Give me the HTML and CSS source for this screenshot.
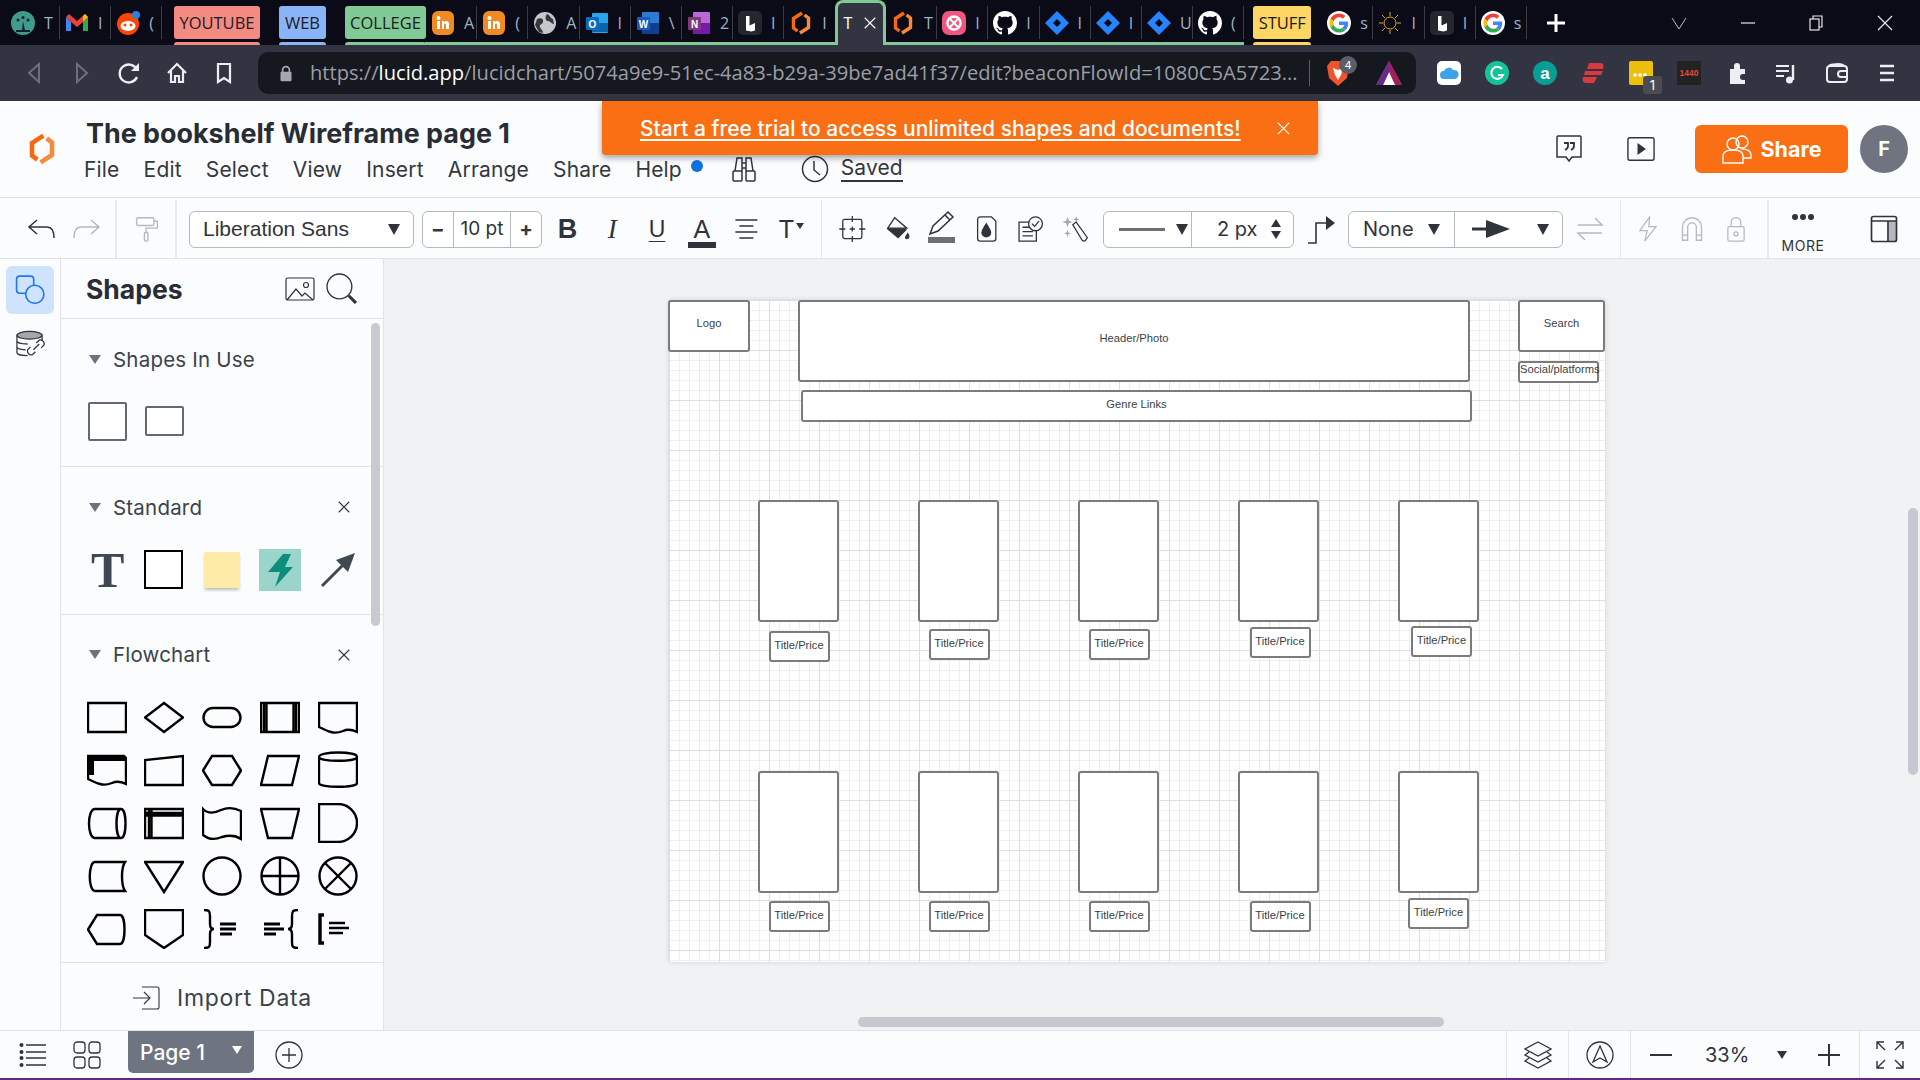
FILE: index.html
```html
<!DOCTYPE html>
<html lang="en">

<head>
  <meta charset="UTF-8">
  <title>The bookshelf Wireframe page 1 - Lucidchart</title>
  <link rel="stylesheet" href="styles.css">
</head>

<body>
  <!-- favicons and logos used more than once -->
  <svg class="defs" width="0" height="0">
    <symbol id="lucid" viewBox="0 0 24 24">
      <path d="M13 2 4.500 7.500V17l4 3" fill="none" stroke="#f56a10" stroke-width="3.400" />
      <path d="M11 22l8.500-5.500V7l-4-3" fill="none" stroke="#f88a3a" stroke-width="3.400" />
    </symbol>
    <symbol id="lucidspark" viewBox="0 0 24 24">
      <rect width="24" height="24" rx="5" fill="#24272e" />
      <path d="M8 5h3.500v9.500L17 12v7.500l-3.500 1-5.500-1z" fill="#fff" />
    </symbol>
    <symbol id="moodle" viewBox="0 0 24 24">
      <rect x="1" width="22" height="24" rx="6" fill="#f08a24" />
      <rect x="6" y="10" width="3" height="8" fill="#fff" />
      <path d="M11 18v-8h2v1c2-2 5-1 5 2v5h-3v-4c0-2-2-2-2 0v4z" fill="#fff" />
      <circle cx="7.500" cy="7" r="2" fill="#fff" />
    </symbol>
    <symbol id="github" viewBox="0 0 16 16">
      <path fill="#fff" d="M8 0C3.580 0 0 3.580 0 8c0 3.540 2.290 6.530 5.470 7.590.400.070.550-.170.550-.380 0-.190-.010-.820-.010-1.490-2.010.370-2.530-.490-2.690-.940-.090-.230-.480-.940-.820-1.130-.280-.150-.680-.520-.010-.530.630-.010 1.080.580 1.230.820.720 1.210 1.870.870 2.330.660.070-.520.280-.870.510-1.070-1.780-.200-3.640-.890-3.640-3.950 0-.870.310-1.590.820-2.150-.080-.200-.360-1.020.080-2.120 0 0 .670-.210 2.200.820.640-.180 1.320-.270 2-.270.680 0 1.360.090 2 .270 1.530-1.040 2.200-.820 2.200-.820.440 1.100.160 1.920.080 2.120.510.560.820 1.270.820 2.150 0 3.070-1.870 3.750-3.650 3.950.290.250.540.730.540 1.480 0 1.070-.010 1.930-.010 2.200 0 .210.150.460.550.380A8.013 8.013 0 0016 8c0-4.420-3.580-8-8-8z" />
    </symbol>
    <symbol id="jira" viewBox="0 0 24 24">
      <path d="M12 0l12 12-12 12L0 12z" fill="#2684ff" />
      <path d="M12 8l4 4-4 4-4-4z" fill="#0a0b16" />
    </symbol>
    <symbol id="google" viewBox="-6 -6 60 60">
      <circle cx="24" cy="24" r="30" fill="#fff" />
      <path fill="#EA4335" d="M24 9.500c3.540 0 6.710 1.220 9.210 3.600l6.850-6.850C35.900 2.380 30.470 0 24 0 14.620 0 6.510 5.380 2.560 13.220l7.980 6.190C12.430 13.720 17.740 9.500 24 9.500z" />
      <path fill="#4285F4" d="M46.980 24.550c0-1.570-.150-3.090-.380-4.550H24v9.020h12.940c-.580 2.960-2.260 5.480-4.780 7.180l7.730 6c4.510-4.180 7.090-10.360 7.090-17.650z" />
      <path fill="#FBBC05" d="M10.530 28.590c-.480-1.450-.760-2.990-.760-4.590s.270-3.140.760-4.590l-7.980-6.190C.920 16.460 0 20.120 0 24c0 3.880.920 7.540 2.560 10.780l7.970-6.190z" />
      <path fill="#34A853" d="M24 48c6.480 0 11.930-2.130 15.890-5.810l-7.730-6c-2.150 1.450-4.920 2.300-8.160 2.300-6.260 0-11.570-4.220-13.470-9.910l-7.980 6.190C6.510 42.620 14.620 48 24 48z" />
    </symbol>
    <symbol id="x-mark" viewBox="0 0 16 16">
      <path d="M2 2l12 12M14 2 2 14" fill="none" stroke="currentColor" stroke-width="1.300" />
    </symbol>
  </svg>

  <!-- browser tabs -->
  <div class="tabbar">
    <div class="tab tab-first"><svg viewBox="0 0 24 24"><circle cx="12" cy="12" r="12" fill="#3f9c8c" /><circle cx="7" cy="9" r="1.500" fill="#123" /><circle cx="12" cy="6.500" r="1.500" fill="#123" /><circle cx="17" cy="9" r="1.500" fill="#123" /><path d="M11 19l1-9 2 9z" fill="#123" /><rect x="5" y="19" width="14" height="2" fill="#123" /></svg><span>T</span></div>
    <div class="tab"><svg viewBox="0 0 24 24"><path d="M1 6v14h5V11z" fill="#4285f4" /><path d="M23 6v14h-5V11z" fill="#34a853" /><path d="M1 6l5 5 6 5 6-5 5-5-3-3-8 7-8-7z" fill="#ea4335" /><path d="M18 11l5-5-3-3-2 2z" fill="#fbbc04" /></svg><span>I</span></div>
    <div class="tab"><svg viewBox="0 0 24 24"><circle cx="12" cy="13" r="11" fill="#ff4500" /><ellipse cx="12" cy="15" rx="7.500" ry="5" fill="#fff" /><circle cx="9" cy="14" r="1.500" fill="#ff4500" /><circle cx="15" cy="14" r="1.500" fill="#ff4500" /><circle cx="20" cy="4" r="4" fill="#2f7ed8" /></svg><span>(</span></div>
    <div class="group group-red">YOUTUBE</div>
    <div class="group group-blue">WEB</div>
    <div class="group group-green">COLLEGE</div>
    <div class="tab tab-line"><svg><use href="#moodle" /></svg><span>A</span></div>
    <div class="tab tab-line"><svg><use href="#moodle" /></svg><span>(</span></div>
    <div class="tab tab-line"><svg viewBox="0 0 24 24"><circle cx="12" cy="12" r="11" fill="#c4c7cc" /><path d="M4 8c4-2 7 0 6 3s-4 2-3 5 3 3 3 6l-4-1-4-7zM14 3c3 1 3 4 6 5l1 5c-3 0-3-3-6-3s-3-5-1-7z" fill="#34373d" /></svg><span>A</span></div>
    <div class="tab tab-line"><svg viewBox="0 0 24 24"><rect x="7" y="2" width="16" height="20" rx="1" fill="#28a8ea" /><path d="M7 12h16v9H7z" fill="#0a64ad" /><rect x="1" y="6" width="13" height="13" rx="1" fill="#0f6cbd" /><text x="7.500" y="16.500" class="svg-letter">O</text></svg><span>I</span></div>
    <div class="tab tab-line"><svg viewBox="0 0 24 24"><rect x="6" y="1" width="17" height="22" rx="1" fill="#2b7cd3" /><rect x="6" y="12" width="17" height="11" fill="#103f91" /><rect x="1" y="6" width="13" height="13" rx="1" fill="#185abd" /><text x="7.500" y="16.500" class="svg-letter">W</text></svg><span>\</span></div>
    <div class="tab tab-line"><svg viewBox="0 0 24 24"><rect x="6" y="1" width="17" height="22" rx="1" fill="#ba68d8" /><rect x="6" y="12" width="17" height="11" fill="#7719aa" /><rect x="1" y="6" width="13" height="13" rx="1" fill="#80397b" /><text x="7.500" y="16.500" class="svg-letter">N</text></svg><span>2</span></div>
    <div class="tab tab-line"><svg><use href="#lucidspark" /></svg><span>I</span></div>
    <div class="tab tab-line tab-before-active"><svg><use href="#lucid" /></svg><span>I</span></div>
    <div class="tab-active"><span>T</span><svg class="tab-close"><use href="#x-mark" /></svg></div>
    <div class="tab tab-line"><svg><use href="#lucid" /></svg><span>T</span></div>
    <div class="tab tab-line"><svg viewBox="0 0 24 24"><rect width="24" height="24" rx="7" fill="#f2557f" /><circle cx="12" cy="12" r="6.500" fill="none" stroke="#fff" stroke-width="2.500" /><path d="M7 7l10 10M17 7 7 17" stroke="#fff" stroke-width="2" /></svg><span>I</span></div>
    <div class="tab tab-line"><svg><use href="#github" /></svg><span>I</span></div>
    <div class="tab tab-line"><svg><use href="#jira" /></svg><span>I</span></div>
    <div class="tab tab-line"><svg><use href="#jira" /></svg><span>I</span></div>
    <div class="tab tab-line"><svg><use href="#jira" /></svg><span>U</span></div>
    <div class="tab tab-line"><svg><use href="#github" /></svg><span>(</span></div>
    <div class="group group-yellow">STUFF</div>
    <div class="tab"><svg><use href="#google" /></svg><span>s</span></div>
    <div class="tab"><svg viewBox="0 0 24 24" fill="none" stroke="#e2a32b" stroke-width="1"><circle cx="12" cy="12" r="6" /><path d="M12 1v4M12 19v4M1 12h4M19 12h4M4 4l3 3M17 17l3 3M20 4l-3 3M7 17l-3 3" /></svg><span>I</span></div>
    <div class="tab"><svg><use href="#lucidspark" /></svg><span>I</span></div>
    <div class="tab"><svg><use href="#google" /></svg><span>s</span></div>
    <svg class="new-tab" viewBox="0 0 20 20"><path d="M10 1v18M1 10h18" stroke="#fff" stroke-width="3" /></svg>
    <div class="win-controls">
      <svg viewBox="0 0 16 16"><path d="M1 3l7 11 7-11" fill="none" stroke="#b9bcc4" stroke-width="1" /></svg>
      <svg viewBox="0 0 16 16"><path d="M1 8h14" stroke="#e8e8e8" stroke-width="1.200" /></svg>
      <svg viewBox="0 0 16 16" fill="none" stroke="#e8e8e8" stroke-width="1.200"><rect x="2" y="4" width="9" height="11" /><path d="M5 4V1h9v11h-3" /></svg>
      <svg viewBox="0 0 16 16"><path d="M1 1l14 14M15 1 1 15" stroke="#e8e8e8" stroke-width="1.200" /></svg>
    </div>
  </div>

  <!-- address bar -->
  <div class="addrbar">
    <div class="nav-icons">
      <svg viewBox="0 0 24 24"><path d="M17 3 7 12l10 9z" fill="none" stroke="#6c707b" stroke-width="2" /></svg>
      <svg viewBox="0 0 24 24"><path d="M7 3l10 9-10 9z" fill="none" stroke="#6c707b" stroke-width="2" /></svg>
      <svg viewBox="0 0 24 24"><path d="M20 9a9 9 0 1 0 0 7" fill="none" stroke="#eceef2" stroke-width="2.400" /><path d="M14 10h8V2z" fill="#eceef2" /></svg>
      <svg viewBox="0 0 24 24"><path d="M3 12 12 3l9 9M6 10v11h4v-6h4v6h4V10" fill="none" stroke="#eceef2" stroke-width="2.200" /></svg>
      <svg viewBox="0 0 24 24"><path d="M6 3h12v18l-6-4-6 4z" fill="none" stroke="#eceef2" stroke-width="2.200" /></svg>
    </div>
    <div class="urlbox">
      <svg class="lock" viewBox="0 0 16 20"><path d="M4 9V6a4 4 0 0 1 8 0v3" fill="none" stroke="#a4a7af" stroke-width="2" /><rect x="1.500" y="8" width="13" height="11" rx="1.500" fill="#a4a7af" /></svg>
      <div class="url">https://<b>lucid.app</b>/lucidchart/5074a9e9-51ec-4a83-b29a-39be7ad41f37/edit?beaconFlowId=1080C5A5723...</div>
      <div class="url-sep"></div>
      <div class="brave">
        <svg viewBox="0 0 24 28"><path d="M5 2h14l4 5-2 12-9 8-9-8L1 7z" fill="#f0542a" /><path d="M7 9l5 2 5-2-2 7-3 5-3-5z" fill="#fff" /></svg>
        <span class="brave-count">4</span>
      </div>
      <svg class="bat" viewBox="0 0 26 24"><path d="M13 0l13 24H0z" fill="#ff4724" /><path d="M13 0l13 24H19L13 11z" fill="#9e1f63" /><path d="M13 11l6 13H7z" fill="#fff" /><path d="M13 0v11L7 24H0z" fill="#662d91" /></svg>
    </div>
    <div class="ext-icons">
      <svg viewBox="0 0 24 24"><rect width="24" height="24" rx="5" fill="#fff" /><path d="M7 18a4 4 0 0 1 0-8 5 5 0 0 1 9-1 4.500 4.500 0 0 1 2 9z" fill="#3da2e8" /></svg>
      <svg viewBox="0 0 24 24"><circle cx="12" cy="12" r="12" fill="#15c39a" /><path d="M17 8a6 6 0 1 0 1 6h-5" fill="none" stroke="#fff" stroke-width="2" /></svg>
      <svg viewBox="0 0 24 24"><circle cx="12" cy="12" r="12" fill="#0a9d95" /><text x="12" y="18" class="svg-a">a</text></svg>
      <svg viewBox="0 0 24 24"><path d="M8 2h11c3 0 4 2 3 6H6zM4 10h18l-2 4H3zM2 16h14l-3 6H5c-3 0-4-3-3-6z" fill="#da3940" /></svg>
      <div class="ext-pill">
        <svg viewBox="0 0 24 24"><rect width="24" height="24" rx="2" fill="#edc00f" /><circle cx="6" cy="14" r="1.800" fill="#fff" /><circle cx="11" cy="14" r="1.800" fill="#fff" /><circle cx="16" cy="14" r="1.800" fill="#fff" /></svg>
        <span class="ext-count">1</span>
      </div>
      <svg viewBox="0 0 24 24"><rect width="24" height="24" fill="#222" /><text x="12" y="15" class="svg-1440">1440</text></svg>
      <svg viewBox="0 0 24 24"><path d="M5 8h4V5a3 3 0 0 1 6 0v3h5v5h-2a3 3 0 0 0 0 6h2v4H5z" fill="#eceef2" /></svg>
      <svg class="ext-music" viewBox="0 0 24 24"><path d="M2 5h13M2 10h13M2 15h8" stroke="#eceef2" stroke-width="2" /><path d="M19 4v15" stroke="#eceef2" stroke-width="2.400" /><circle cx="15.500" cy="19" r="3.500" fill="#eceef2" /></svg>
      <svg class="ext-wallet" viewBox="0 0 24 24" fill="none" stroke="#eceef2" stroke-width="2"><rect x="2" y="5" width="20" height="16" rx="3" /><path d="M4 5c0-2 14-3 15 0M22 10h-6a3 3 0 0 0 0 6h6" /></svg>
      <svg class="ext-menu" viewBox="0 0 24 24"><path d="M5 5h14M5 12h14M5 19h14" stroke="#eceef2" stroke-width="2.400" /></svg>
    </div>
  </div>

  <!-- document header -->
  <header class="appbar">
    <svg class="app-logo"><use href="#lucid" /></svg>
    <div class="doc-info">
      <div class="doc-title">The bookshelf Wireframe page 1</div>
      <nav class="menu">
        <span>File</span>
        <span>Edit</span>
        <span>Select</span>
        <span>View</span>
        <span>Insert</span>
        <span>Arrange</span>
        <span>Share</span>
        <span class="menu-help">Help</span>
        <i class="help-dot"></i>
        <svg class="binoculars" viewBox="0 0 26 28" fill="none" stroke="#2f343c" stroke-width="1.500"><path d="M4 16 6 3h5v13M22 16 20 3h-5v13M11 8h4M11 13h4" /><rect x="2" y="16" width="9" height="10" rx="1" /><rect x="15" y="16" width="9" height="10" rx="1" /></svg>
        <svg class="clock" viewBox="0 0 28 28" fill="none" stroke="#2f343c" stroke-width="1.500"><circle cx="14" cy="14" r="12.500" /><path d="M13 6v9l6 5" /></svg>
        <span class="saved">Saved</span>
      </nav>
    </div>
    <div class="app-actions">
      <svg class="act-icon" viewBox="0 0 28 28" fill="none" stroke="#2f343c" stroke-width="1.500"><path d="M3 1h22a1 1 0 0 1 1 1v20H17l-3 4-3-4H2V2a1 1 0 0 1 1-1z" /><path d="M9 8h4v3c0 2-1 3-3 4M15 8h4v3c0 2-1 3-3 4" stroke-width="1.800" /></svg>
      <svg class="act-icon" viewBox="0 0 30 26" fill="none" stroke="#2f343c" stroke-width="1.500"><rect x="1" y="1" width="28" height="24" rx="2" /><path d="M12 8l7 5-7 5z" fill="#2f343c" /></svg>
      <button class="share-btn">
        <svg viewBox="0 0 30 32" fill="none" stroke="#fff" stroke-width="1.400"><circle cx="20" cy="9" r="6" /><circle cx="11" cy="11" r="6" /><path d="M1 30V23c0-4 4-6 10-6s10 2 10 6v7zM19 16c6 0 10 2 10 6v3h-8" /></svg>
        Share
      </button>
      <div class="avatar">F</div>
    </div>
    <div class="trial-banner">
      <a>Start a free trial to access unlimited shapes and documents!</a>
      <svg class="banner-close"><use href="#x-mark" /></svg>
    </div>
  </header>

  <!-- formatting toolbar -->
  <div class="toolbar">
    <div class="tool-set tool-history">
      <svg class="tool" viewBox="0 0 30 26" fill="none" stroke="#2f343c" stroke-width="1.500"><path d="M10 4 2 11l8 7M2 11h18c5 0 7 4 7 11" /></svg>
      <svg class="tool faded" viewBox="0 0 30 26" fill="none" stroke="#b5b8be" stroke-width="1.500"><path d="M20 4l8 7-8 7M28 11H10c-5 0-7 4-7 11" /></svg>
    </div>
    <div class="tool-set tool-paint">
      <svg class="tool" viewBox="0 0 30 30" fill="none" stroke="#b5b8be" stroke-width="1.600"><rect x="3" y="2" width="20" height="9" rx="2" /><path d="M23 6h4v8H14v5" /><rect x="12" y="19" width="4" height="10" rx="1.500" /></svg>
    </div>
    <div class="select select-font">Liberation Sans<i class="caret"></i></div>
    <div class="stepper">
      <span class="step-btn">&minus;</span>
      <span class="step-val">10 pt</span>
      <span class="step-btn">+</span>
    </div>
    <div class="tool-set tool-text">
      <span class="tool glyph glyph-b">B</span>
      <span class="tool glyph glyph-i">I</span>
      <span class="tool glyph glyph-u">U</span>
      <span class="tool glyph glyph-a">A</span>
      <svg class="tool" viewBox="0 0 26 26" stroke="#2f343c" stroke-width="1.700"><path d="M2 4h22M6 10h14M2 16h22M6 22h14" /></svg>
      <span class="tool glyph glyph-t">T<i class="caret caret-small"></i></span>
    </div>
    <div class="tool-set tool-style">
      <svg class="tool" viewBox="0 0 30 30" fill="none" stroke="#2f343c" stroke-width="1.500"><rect x="4" y="4" width="22" height="22" rx="2" /><path d="M15 0v7M15 23v7M0 15h7M23 15h7M12 15h6M15 12v6" /></svg>
      <svg class="tool" viewBox="0 0 30 30"><path d="M12 2l14 14-10 10L3 15z" fill="#2f343c" /><path d="M12 2 4 14h22z" fill="#fbfcfe" stroke="#2f343c" stroke-width="1.500" /><path d="M27 19c2 3 3 5 1 7s-5 0-4-2z" fill="#2f343c" /></svg>
      <div class="pen-tool">
        <svg viewBox="0 0 30 26" fill="none" stroke="#2f343c" stroke-width="1.500"><path d="M4 24l3-8L22 2l5 5-15 14zM19 5l5 5" /></svg>
        <i></i>
      </div>
      <svg class="tool" viewBox="0 0 24 30" fill="none" stroke="#2f343c" stroke-width="1.500"><path d="M5 1h13l5 5v20a3 3 0 0 1-3 3H5a3 3 0 0 1-3-3V4a3 3 0 0 1 3-3z" /><path d="M12 9c3 5 5 7 5 10a5 5 0 0 1-10 0c0-3 2-5 5-10z" fill="#2f343c" /></svg>
      <svg class="tool" viewBox="0 0 30 30" fill="none" stroke="#2f343c" stroke-width="1.500"><path d="M16 7H2v22h20V16M6 13h8M6 18h12M6 23h12" /><circle cx="21" cy="9" r="8" fill="#fbfcfe" /><path d="M17 9l3 3 5-6" /></svg>
      <svg class="tool" viewBox="0 0 30 30"><path d="M6 1l1.500 4.500L12 7l-4.500 1.500L6 13 4.500 8.500 0 7l4.500-1.500zM16 0l1 3 3 1-3 1-1 3-1-3-3-1 3-1zM6 16l1 3 3 1-3 1-1 3-1-3-3-1 3-1z" fill="#a4a7ae" /><path d="M12 10l4-3 13 18-3 4c-2 0-3-1-3-1z" fill="none" stroke="#2f343c" stroke-width="1.400" /></svg>
    </div>
    <div class="select select-line">
      <div class="sel-part sel-dash"><i class="line-sample"></i><i class="caret"></i></div>
      <div class="sel-part sel-px">2 px<span class="spin"><i></i><i></i></span></div>
    </div>
    <svg class="tool tool-elbow" viewBox="0 0 30 30" fill="none" stroke="#2f343c" stroke-width="1.600"><path d="M2 29h8V9h12" /><path d="M20 2l9 7-9 7z" fill="#2f343c" stroke="none" /></svg>
    <div class="select select-ends">
      <div class="sel-part sel-none">None<i class="caret"></i></div>
      <div class="sel-part sel-arrow">
        <svg viewBox="0 0 38 18"><path d="M0 9h24" stroke="#2f343c" stroke-width="3" /><path d="M14 0l24 9-24 9z" fill="#2f343c" /></svg>
        <i class="caret"></i>
      </div>
    </div>
    <svg class="tool tool-swap" viewBox="0 0 30 26" fill="none" stroke="#b5b8be" stroke-width="1.500"><path d="M3 9h24l-7-7M27 17H3l7 7" /></svg>
    <div class="tool-set tool-shape">
      <svg class="tool" viewBox="0 0 26 32" fill="none" stroke="#b5b8be" stroke-width="1.500"><path d="M15 1 3 18h9L9 31l14-18h-9z" /></svg>
      <svg class="tool" viewBox="0 0 26 30" fill="none" stroke="#b5b8be" stroke-width="1.500"><path d="M2 28V13a11 11 0 0 1 22 0v15h-6V13a5 5 0 0 0-10 0v15zM2 22h6M18 22h6" /></svg>
      <svg class="tool" viewBox="0 0 24 32" fill="none" stroke="#b5b8be" stroke-width="1.500"><path d="M6 13V8a6 6 0 0 1 12 0v5" /><rect x="2" y="13" width="20" height="18" rx="2" /><circle cx="12" cy="22" r="2.500" /></svg>
    </div>
    <div class="more"><span class="more-dots"><i></i><i></i><i></i></span><span class="more-label">MORE</span></div>
    <svg class="tool tool-panel" viewBox="0 0 28 28" fill="none" stroke="#2f343c" stroke-width="1.700"><path d="M19 6h7v20h-7z" fill="#b5b8be" stroke="none" /><rect x="1.500" y="1.500" width="25" height="25" rx="2" /><path d="M2 6h24M18 6v20" /></svg>
  </div>

  <div class="main">
    <aside class="rail">
      <div class="rail-btn rail-active">
        <svg viewBox="0 0 28 28" fill="none" stroke="#1f78ea" stroke-width="1.500"><rect x="1" y="1" width="16" height="16" rx="3" /><circle cx="18" cy="18" r="8.500" fill="#cfe3fd" /></svg>
      </div>
      <div class="rail-btn">
        <svg viewBox="0 0 32 30" fill="none" stroke="#2f343c" stroke-width="1.300"><path d="M2 6v18c0 2 6 3 11 3M28 6v6M2 12c0 2 6 3 11 3M2 18c0 2 6 3 9 3" /><ellipse cx="15" cy="6" rx="13" ry="4" fill="#a4a7ae" /><path d="M22 14l3-3a4 4 0 0 1 5 5l-3 3M21 23l-3 3a4 4 0 0 1-5-5l3-3M19 21l6-6" /></svg>
      </div>
    </aside>

    <aside class="panel">
      <div class="panel-head">
        <h2>Shapes</h2>
        <svg class="head-img" viewBox="0 0 30 24" fill="none" stroke="#2f343c" stroke-width="1.200"><rect x="1" y="1" width="28" height="22" rx="1.500" /><circle cx="21" cy="8" r="2.500" /><path d="M2 23l9-11 6 7 3-3 8 7" /></svg>
        <svg class="head-search" viewBox="0 0 30 30" fill="none" stroke="#2f343c" stroke-width="1.300"><circle cx="13" cy="13" r="12" /><path d="M22 22l7 7" stroke-width="3" /></svg>
      </div>

      <section class="sec sec-use">
        <div class="sec-title"><i class="tri"></i>Shapes In Use</div>
        <div class="sec-row">
          <i class="use-square"></i>
          <i class="use-rect"></i>
        </div>
      </section>

      <section class="sec sec-std">
        <div class="sec-title"><i class="tri"></i>Standard<svg class="sec-x"><use href="#x-mark" /></svg></div>
        <div class="sec-row sec-row-std">
          <span class="std-t">T</span>
          <i class="std-square"></i>
          <i class="std-sticky"></i>
          <span class="std-bolt"><svg viewBox="0 0 42 42"><path d="M24 5h8l-6 13h8L16 38l5-15H9z" fill="#0b8f7c" /></svg></span>
          <svg class="std-arrow" viewBox="0 0 36 36"><path d="M2 34 26 10" stroke="#3f4853" stroke-width="3" /><path d="M35 1 28 20 16 8z" fill="#3f4853" /></svg>
        </div>
      </section>

      <section class="sec sec-flow">
        <div class="sec-title"><i class="tri"></i>Flowchart<svg class="sec-x"><use href="#x-mark" /></svg></div>
        <div class="flow-grid">
          <svg viewBox="0 0 40 40"><path d="M1 6h38v29H1z" /></svg>
          <svg viewBox="0 0 40 40"><path d="M20 6l19 14.500L20 35 1 20.500z" /></svg>
          <svg viewBox="0 0 40 40"><rect x="1.500" y="11" width="37" height="19" rx="9.500" /></svg>
          <svg viewBox="0 0 40 40"><path d="M1 6h38v29H1zM4 6v29M6.500 6v29M33.500 6v29M36 6v29" /></svg>
          <svg viewBox="0 0 40 40"><path d="M1 6h38v29c-6-3-10-3-14-1-5 2-9 2-12 1-4-1-8-3-12-5z" /></svg>

          <svg viewBox="0 0 40 40"><path d="M1 6h36l2 2v26c-6-3-10-3-14-1-5 2-9 2-12 1-4-1-8-3-12-5z" /><path d="M2 7h36v4H7v14H2z" class="fill" /></svg>
          <svg viewBox="0 0 40 40"><path d="M1 35V10l38-4v29z" /></svg>
          <svg viewBox="0 0 40 40"><path d="M10 6h20l9 14.500L30 35H10L1 20.500z" /></svg>
          <svg viewBox="0 0 40 40"><path d="M8 6h31l-7 29H1z" /></svg>
          <svg viewBox="0 0 40 40"><path d="M1 7c0-6 38-6 38 0v26c0 5-38 5-38 0zM1 7c0 5 38 5 38 0" /></svg>

          <svg viewBox="0 0 40 40"><path d="M8 6h26c6 0 6 29 0 29H8C0 35 0 6 8 6zM34 6c-6 0-6 29 0 29" /></svg>
          <svg viewBox="0 0 40 40"><path d="M1 6h38v29H1zM1 10h38M1 12.500h38M5 6v29M7.500 6v29" /></svg>
          <svg viewBox="0 0 40 40"><path d="M1 6c5 5 12 4 18 1 7-3 14-2 20 1v28c-6-4-12-4-19-2-7 3-14 2-19-2z" /></svg>
          <svg viewBox="0 0 40 40"><path d="M1 6h38l-7 29H8z" /></svg>
          <svg viewBox="0 0 40 40"><path d="M1 1h19a19 19 0 0 1 0 38H1z" /></svg>

          <svg viewBox="0 0 40 40"><path d="M8 6h30c-4 6-4 23 0 29H8C1 35 1 6 8 6z" /></svg>
          <svg viewBox="0 0 40 40"><path d="M1 6h38L20 36z" /></svg>
          <svg viewBox="0 0 40 40"><circle cx="20" cy="20" r="18.500" /></svg>
          <svg viewBox="0 0 40 40"><circle cx="20" cy="20" r="18.500" /><path d="M20 1v38M1 20h38" /></svg>
          <svg viewBox="0 0 40 40"><circle cx="20" cy="20" r="18.500" /><path d="M7 7l26 26M33 7 7 33" /></svg>

          <svg viewBox="0 0 40 40"><path d="M10 6h23c6 0 6 29 0 29H10L1 20.500z" /></svg>
          <svg viewBox="0 0 40 40"><path d="M1 1h38v25L20 39 1 26z" /></svg>
          <svg viewBox="0 0 40 40"><path d="M2 1c5 0 6 1 6 6v8c0 3 1 5 4 5-3 0-4 2-4 5v8c0 5-1 6-6 6" /><path class="bars" d="M18 15h16M18 20h16M18 25h12" /></svg>
          <svg viewBox="0 0 40 40"><path d="M38 1c-5 0-6 1-6 6v8c0 3-1 5-4 5 3 0 4 2 4 5v8c0 5 1 6 6 6" /><path class="bars" d="M4 15h16M4 20h20M4 25h12" /></svg>
          <svg viewBox="0 0 40 40"><path class="bracket" d="M6 6H2v28h4" /><path d="M11 14h16M11 19h20M11 24h14" /></svg>
        </div>
      </section>

      <div class="import">
        <svg viewBox="0 0 28 24" fill="none" stroke="#2f343c" stroke-width="1.100"><path d="M1 12h17M12 6l6 6-6 6M10 1h15a2 2 0 0 1 2 2v18a2 2 0 0 1-2 2H10" /></svg>
        Import Data
      </div>
    </aside>

    <div class="canvas">
      <div class="page">
        <div class="shape s-logo">Logo</div>
        <div class="shape s-header">Header/Photo</div>
        <div class="shape s-search">Search</div>
        <div class="shape s-social">Social/platforms</div>
        <div class="shape s-genre">Genre Links</div>

        <div class="shape card c1 r1"></div>
        <div class="shape card c2 r1"></div>
        <div class="shape card c3 r1"></div>
        <div class="shape card c4 r1"></div>
        <div class="shape card c5 r1"></div>
        <div class="shape label l1">Title/Price</div>
        <div class="shape label l2">Title/Price</div>
        <div class="shape label l3">Title/Price</div>
        <div class="shape label l4">Title/Price</div>
        <div class="shape label l5">Title/Price</div>

        <div class="shape card c1 r2"></div>
        <div class="shape card c2 r2"></div>
        <div class="shape card c3 r2"></div>
        <div class="shape card c4 r2"></div>
        <div class="shape card c5 r2"></div>
        <div class="shape label l6">Title/Price</div>
        <div class="shape label l7">Title/Price</div>
        <div class="shape label l8">Title/Price</div>
        <div class="shape label l9">Title/Price</div>
        <div class="shape label l10">Title/Price</div>
      </div>
      <div class="scroll-x"></div>
      <div class="scroll-y"></div>
    </div>
  </div>

  <!-- page tabs and zoom -->
  <footer class="bottombar">
    <svg class="foot-icon foot-list" viewBox="0 0 28 26" fill="none" stroke="#2f343c" stroke-width="1.300"><path d="M7 3h20M7 10h20M7 16h20M7 23h20" /><g fill="#2f343c" stroke="none"><circle cx="2.500" cy="3" r="2" /><circle cx="2.500" cy="10" r="2" /><circle cx="2.500" cy="16" r="2" /><circle cx="2.500" cy="23" r="2" /></g></svg>
    <svg class="foot-icon foot-grid" viewBox="0 0 28 28" fill="none" stroke="#2f343c" stroke-width="1.300"><rect x="1" y="1" width="11" height="11" rx="3" /><rect x="16" y="1" width="11" height="11" rx="3" /><rect x="1" y="16" width="11" height="11" rx="3" /><rect x="16" y="16" width="11" height="11" rx="3" /></svg>
    <div class="page-tab">Page 1<i class="caret caret-white"></i></div>
    <svg class="foot-icon foot-add" viewBox="0 0 28 28" fill="none" stroke="#2f343c" stroke-width="1.300"><circle cx="14" cy="14" r="13" /><path d="M14 7v14M7 14h14" /></svg>
    <div class="foot-right">
      <div class="foot-cell foot-layers"><svg viewBox="0 0 28 28" fill="none" stroke="#2f343c" stroke-width="1.300"><path d="M14 1l13 7-13 7L1 8z" /><path d="M5 11l-4 3 13 7 13-7-4-3M5 17l-4 3 13 7 13-7-4-3" /></svg></div>
      <div class="foot-cell foot-nav"><svg viewBox="0 0 28 28" fill="none" stroke="#2f343c" stroke-width="1.300"><circle cx="14" cy="14" r="13" /><path d="M14 5l7 16-7-4-7 4z" /></svg></div>
      <div class="foot-zoom">
        <svg viewBox="0 0 22 4"><path d="M0 2h22" stroke="#2f343c" stroke-width="2" /></svg>
        <span class="zoom-val">33%</span>
        <i class="caret"></i>
        <svg viewBox="0 0 22 22"><path d="M0 11h22M11 0v22" stroke="#2f343c" stroke-width="2" /></svg>
      </div>
      <div class="foot-cell foot-full"><svg viewBox="0 0 28 28" fill="none" stroke="#2f343c" stroke-width="1.400"><path d="M1 8V1h7M1 1l8 8M27 8V1h-7M27 1l-8 8M1 20v7h7M1 27l8-8M27 20v7h-7M27 27l-8-8" /></svg></div>
    </div>
  </footer>
  <div class="purple-line"></div>
</body>

</html>
```

FILE: styles.css
```css
* {
  margin: 0;
  padding: 0;
  box-sizing: border-box;
}

html,
body {
  width: 1920px;
  height: 1080px;
  overflow: hidden;
}

body {
  display: flex;
  flex-direction: column;
  background-color: #fbfcfe;
  color: #2f343c;
  font-family: Inter, "Noto Sans", sans-serif;
}

i {
  display: block;
  font-style: normal;
}

svg {
  display: block;
  flex: none;
}

.defs {
  position: absolute;
}

/* browser tabs */
.tabbar {
  display: flex;
  height: 45px;
  flex: none;
  background-color: #0a0b16;
  font-family: "Open Sans", sans-serif;
  position: relative;
}

.tab {
  display: flex;
  align-items: center;
  width: 51.2px;
  height: 33px;
  margin-top: 6px;
  padding-left: 5px;
  border-right: 1px solid #3a3c46;
  color: #9db4c6;
  font-size: 16px;
}

.tab-first {
  width: 60px;
  padding-left: 11px;
}

.tab svg {
  width: 24px;
  height: 24px;
}

.tab span {
  margin-left: 9px;
  width: 12px;
}

.tab-before-active {
  border-right: none;
}

.group {
  display: flex;
  align-items: center;
  justify-content: center;
  height: 33px;
  margin-top: 6px;
  border-radius: 3px;
  color: #1c1c20;
  font-size: 16.5px;
  position: relative;
}

.group::after {
  content: "";
  position: absolute;
  left: 0;
  right: 0;
  top: 36px;
  height: 3px;
  border-radius: 3px 3px 0 0;
  background-color: inherit;
}

.group-red {
  width: 86px;
  margin-left: 11.6px;
  background-color: #f38b83;
}

.group-blue {
  width: 47px;
  margin-left: 19px;
  background-color: #8ab4f8;
}

.group-green {
  width: 81px;
  margin-left: 19px;
  background-color: #81c995;
}

.group-yellow {
  width: 58px;
  margin-left: 9px;
  margin-right: 11px;
  background-color: #fdd663;
}

.tab-active {
  display: flex;
  align-items: center;
  width: 50.5px;
  height: 45px;
  padding: 0 0 2px 5px;
  border: 3px solid #81c995;
  border-bottom: none;
  border-radius: 8px 8px 0 0;
  background-color: #323541;
  color: #fff;
  font-size: 16px;
  position: relative;
}

.tab-close {
  width: 14px;
  height: 14px;
  margin-left: 11px;
  color: #fff;
}

.tab-line {
  position: relative;
}

.tab-line::before {
  content: "";
  position: absolute;
  left: -1px;
  right: -1px;
  top: 36px;
  height: 3px;
  background-color: #81c995;
}

.new-tab {
  width: 20px;
  height: 20px;
  margin: 13px 0 0 19px;
}

.win-controls {
  position: absolute;
  right: 0;
  top: 0;
  width: 249px;
  height: 45px;
  display: flex;
  align-items: center;
  gap: 52.7px;
}

.win-controls svg {
  width: 16px;
  height: 16px;
}

/* address bar */
.addrbar {
  display: flex;
  align-items: center;
  height: 56px;
  flex: none;
  background-color: #323541;
}

.nav-icons {
  display: flex;
  width: 258px;
  padding-left: 22px;
  gap: 23.5px;
}

.nav-icons svg {
  width: 24px;
  height: 24px;
}

.urlbox {
  display: flex;
  align-items: center;
  width: 1158px;
  height: 42px;
  border-radius: 10px;
  background-color: #16181f;
  padding-left: 21px;
}

.lock {
  width: 14px;
  height: 17px;
}

.url {
  width: 988px;
  margin: 0 0 2px 17px;
  color: #9b9ea6;
  font-family: "Open Sans", sans-serif;
  font-size: 20.12px;
  white-space: nowrap;
  overflow: hidden;
}

.url b {
  color: #fff;
  font-weight: 400;
}

.url-sep {
  width: 1px;
  height: 26px;
  margin-left: 11px;
  background-color: #5a5d66;
}

.brave {
  position: relative;
  margin-left: 16px;
}

.brave svg {
  width: 24px;
  height: 28px;
}

.brave-count {
  position: absolute;
  left: 13px;
  top: -3px;
  width: 18px;
  height: 18px;
  border-radius: 50%;
  background-color: #5b5e68;
  color: #fff;
  font-size: 11px;
  line-height: 18px;
  text-align: center;
}

.bat {
  width: 26px;
  height: 24px;
  margin-left: 26px;
}

.ext-icons {
  display: flex;
  align-items: center;
  gap: 24px;
  margin-left: 21px;
}

.ext-icons svg {
  width: 24px;
  height: 24px;
}

.ext-music {
  margin-left: 1px;
}

.ext-wallet {
  margin-left: 3px;
}

.ext-menu {
  margin-left: 2px;
}

.ext-pill {
  position: relative;
}

.ext-count {
  position: absolute;
  left: 14px;
  top: 15px;
  width: 19px;
  height: 18px;
  border-radius: 3px;
  background-color: #4a4c52;
  color: #fff;
  font-size: 13px;
  line-height: 18px;
  text-align: center;
}

.svg-letter {
  fill: #fff;
  font: 700 10px "Liberation Sans", sans-serif;
  text-anchor: middle;
}

.svg-a {
  fill: #fff;
  font: 700 17px "Liberation Sans", sans-serif;
  text-anchor: middle;
}

.svg-1440 {
  fill: #e0483f;
  font: 700 8.5px "Liberation Sans", sans-serif;
  text-anchor: middle;
}

/* document header */
.appbar {
  display: flex;
  align-items: flex-start;
  height: 97px;
  flex: none;
  position: relative;
  background-color: #fbfcfe;
  border-bottom: 1px solid #e2e3e6;
}

.app-logo {
  width: 32px;
  height: 32px;
  margin: 32px 0 0 26px;
}

.doc-info {
  margin: 15px 0 0 28px;
}

.doc-title {
  font-size: 26.9px;
  font-weight: 700;
  line-height: 34px;
  color: #282c35;
  white-space: nowrap;
}

.menu {
  display: flex;
  align-items: center;
  gap: 24.2px;
  height: 36px;
  margin: 1px 0 0 -2px;
  font-size: 21px;
  letter-spacing: 0.15px;
  color: #33383f;
}

.menu-help {
  position: relative;
}

.help-dot {
  width: 12px;
  height: 12px;
  border-radius: 50%;
  margin: -6px 0 0 -15px;
  background-color: #1071e5;
}

.binoculars {
  width: 26px;
  height: 28px;
  margin-left: 4px;
}

.clock {
  width: 28px;
  height: 28px;
  margin-left: 20px;
}

.saved {
  margin-left: -13px;
  border-bottom: 2px solid #2f343c;
  line-height: 24px;
}

.app-actions {
  display: flex;
  align-items: center;
  margin: 24px 12px 0 auto;
}

.act-icon {
  width: 28px;
  height: 28px;
  margin-right: 44px;
}

.share-btn {
  display: flex;
  align-items: center;
  justify-content: center;
  gap: 9px;
  width: 153px;
  height: 48px;
  margin: 0 12px 0 -4px;
  border: none;
  border-radius: 6px;
  background-color: #fa6e14;
  color: #fff;
  font-family: Inter, sans-serif;
  font-size: 21.5px;
  font-weight: 700;
}

.share-btn svg {
  width: 30px;
  height: 32px;
}

.avatar {
  width: 48px;
  height: 48px;
  border-radius: 50%;
  background-color: #6f7480;
  color: #fff;
  font-size: 20px;
  font-weight: 700;
  line-height: 48px;
  text-align: center;
}

.trial-banner {
  position: absolute;
  left: 602px;
  top: 0;
  width: 716px;
  height: 54px;
  display: flex;
  align-items: center;
  padding-left: 38px;
  background-color: #fa6e14;
  border-radius: 0 0 4px 4px;
  box-shadow: 0 3px 6px rgba(0, 0, 0, 0.35);
  color: #fff;
  font-size: 21px;
  font-weight: 500;
}

.trial-banner a {
  text-decoration: underline;
  text-underline-offset: 3px;
  white-space: nowrap;
}

.banner-close {
  width: 15px;
  height: 15px;
  margin-left: 35px;
  color: #fff;
}

/* formatting toolbar */
.toolbar {
  display: flex;
  align-items: center;
  height: 61px;
  flex: none;
  padding-top: 2px;
  background-color: #fbfcfe;
  border-bottom: 1px solid #e2e3e6;
}

.tool {
  width: 44px;
  height: 26px;
  flex: none;
}

.tool-set {
  display: flex;
  align-items: center;
  height: 100%;
}

.tool-history {
  width: 117px;
  padding-left: 20px;
  border-right: 2px solid #e8e9ec;
}

.tool-paint {
  width: 60px;
  border-right: 2px solid #e8e9ec;
  padding-left: 8px;
}

.select {
  display: flex;
  align-items: center;
  height: 37px;
  border: 1px solid #b5b8be;
  border-radius: 6px;
  background-color: #fff;
  font-size: 20px;
}

.select-font {
  width: 225px;
  margin-left: 12px;
  padding: 0 13px;
  justify-content: space-between;
  font-family: "Liberation Sans", sans-serif;
  font-size: 21px;
}

.caret {
  width: 0;
  height: 0;
  border-left: 6px solid transparent;
  border-right: 6px solid transparent;
  border-top: 11px solid #2f343c;
}

.caret-small {
  border-left-width: 4px;
  border-right-width: 4px;
  border-top-width: 6px;
  margin: 0 0 6px 2px;
}

.caret-white {
  border-top-color: #fff;
  border-left-width: 5.5px;
  border-right-width: 5.5px;
  border-top-width: 8px;
  margin-bottom: 5px;
}

.stepper {
  display: flex;
  align-items: center;
  width: 120px;
  height: 37px;
  margin-left: 8px;
  border: 1px solid #b5b8be;
  border-radius: 6px;
  background-color: #fff;
}

.step-btn {
  width: 30px;
  text-align: center;
  font-size: 20px;
  font-weight: 700;
  color: #33383f;
}

.step-val {
  width: 59px;
  height: 100%;
  border-left: 1px solid #b5b8be;
  border-right: 1px solid #b5b8be;
  text-align: center;
  font-size: 19px;
  line-height: 33px;
  white-space: nowrap;
}

.glyph {
  display: flex;
  align-items: center;
  justify-content: center;
  height: 34px;
  font-family: "Liberation Sans", sans-serif;
  font-size: 27px;
  color: #2f343c;
  position: relative;
}

.glyph-b {
  font-weight: 700;
}

.glyph-i {
  font-family: "Liberation Serif", serif;
  font-style: italic;
  font-weight: 400;
}

.glyph-u {
  font-size: 23px;
  text-decoration: underline;
  text-underline-offset: 4px;
  text-decoration-thickness: 1px;
}

.glyph-a {
  font-size: 25px;
}

.glyph-a::after {
  content: "";
  position: absolute;
  left: 9px;
  right: 8px;
  bottom: -2px;
  height: 6px;
  background-color: #2f343c;
}

.glyph-t {
  font-size: 25px;
}

.tool-text {
  width: 277px;
  margin-left: 3px;
  border-right: 1px solid #e8e9ec;
}

.tool-text .tool {
  width: 44.8px;
}

.tool-style {
  width: 273px;
  margin-left: 8px;
}

.tool-style .tool {
  width: 44.6px;
}

.pen-tool {
  width: 44.6px;
  height: 38px;
  display: flex;
  flex-direction: column;
  align-items: center;
  flex: none;
}

.pen-tool svg {
  width: 30px;
  height: 26px;
}

.pen-tool i {
  width: 27px;
  height: 6px;
  margin-top: 1px;
  background-color: #6d6f74;
}

.select-line {
  width: 191px;
}

.sel-part {
  display: flex;
  align-items: center;
  height: 100%;
}

.sel-dash {
  width: 88px;
  padding-left: 15px;
  border-right: 1px solid #b5b8be;
  gap: 11px;
}

.line-sample {
  width: 46px;
  height: 3px;
  background-color: #6d6f74;
}

.sel-px {
  width: 101px;
  padding-left: 25px;
  white-space: nowrap;
}

.spin {
  margin-left: 13px;
}

.spin i {
  width: 0;
  height: 0;
  border-left: 5px solid transparent;
  border-right: 5px solid transparent;
  border-bottom: 8px solid #2f343c;
}

.spin i+i {
  margin-top: 4px;
  border-bottom: none;
  border-top: 8px solid #2f343c;
}

.tool-elbow {
  margin-left: 5px;
  height: 30px;
  width: 44px;
}

.select-ends {
  width: 215px;
  margin-left: 5px;
}

.sel-none {
  width: 106px;
  padding-left: 14px;
  gap: 14px;
  border-right: 1px solid #b5b8be;
}

.sel-arrow {
  width: 108px;
  padding-left: 17px;
  gap: 27px;
}

.sel-arrow svg {
  width: 38px;
  height: 18px;
}

.tool-swap {
  margin-left: 5px;
}

.tool-shape {
  width: 149px;
  margin-left: 8px;
  padding-left: 5px;
  border-left: 1px solid #e8e9ec;
  border-right: 2px solid #e8e9ec;
}

.more {
  display: flex;
  flex-direction: column;
  align-items: center;
  width: 68px;
  flex: none;
  margin-top: 5px;
}

.more-dots {
  display: flex;
  gap: 2px;
  height: 24px;
  padding-top: 4px;
}

.more-dots i {
  width: 6px;
  height: 6px;
  border-radius: 50%;
  background-color: #2f343c;
}

.more-label {
  margin-top: 3px;
  font-size: 14px;
  letter-spacing: 0.5px;
}

.tool-panel {
  margin-left: 25px;
  height: 28px;
}

/* left side */
.main {
  display: flex;
  flex: 1;
  min-height: 0;
}

.rail {
  width: 61px;
  flex: none;
  padding: 7px 6px 0;
  border-right: 1px solid #e2e3e6;
}

.rail-btn {
  display: flex;
  align-items: center;
  justify-content: center;
  width: 48px;
  height: 48px;
  margin-bottom: 6px;
  border-radius: 6px;
}

.rail-btn svg {
  width: 31px;
  height: 30px;
}

.rail-active {
  background-color: #cfe3fd;
}

.panel {
  width: 323px;
  flex: none;
  display: flex;
  flex-direction: column;
  border-right: 1px solid #e2e3e6;
  position: relative;
}

.panel::after {
  content: "";
  position: absolute;
  left: 310px;
  top: 64px;
  width: 9px;
  height: 303px;
  border-radius: 5px;
  background-color: #c8cad0;
}

.panel-head {
  display: flex;
  align-items: center;
  height: 60px;
  padding-left: 25px;
  border-bottom: 1px solid #e2e3e6;
}

.panel-head h2 {
  width: 199px;
  font-size: 26.5px;
  font-weight: 700;
  color: #282c35;
}

.head-img {
  width: 30px;
  height: 24px;
}

.head-search {
  width: 31px;
  height: 31px;
  margin-left: 11px;
}

.sec {
  padding-left: 28px;
  border-bottom: 1px solid #e2e3e6;
}

.sec-use {
  height: 148px;
  padding-top: 27px;
}

.sec-std {
  height: 148px;
  padding-top: 27px;
}

.sec-flow {
  height: 348px;
  padding-top: 26.5px;
}

.sec-title {
  display: flex;
  align-items: center;
  height: 26px;
  font-size: 20.5px;
  color: #3c424b;
  letter-spacing: 0.2px;
  position: relative;
}

.tri {
  width: 0;
  height: 0;
  margin-right: 12px;
  border-left: 6px solid transparent;
  border-right: 6px solid transparent;
  border-top: 9px solid #6c717d;
}

.sec-x {
  position: absolute;
  left: 248px;
  top: 6px;
  width: 14px;
  height: 14px;
  color: #2f343c;
}

.sec-row {
  display: flex;
  align-items: center;
  margin-top: 30px;
  height: 38px;
}

.use-square {
  width: 39px;
  height: 39px;
  margin-left: -1px;
  border: 2.5px solid #65686e;
  border-radius: 2px;
  background-color: #fff;
}

.use-rect {
  width: 39px;
  height: 30px;
  margin-left: 18px;
  border: 2.5px solid #65686e;
  border-radius: 2px;
  background-color: #fff;
}

.sec-row-std {
  margin-top: 28.5px;
  height: 42px;
}

.std-t {
  width: 30px;
  margin-left: 2px;
  font-family: "Liberation Serif", serif;
  font-size: 50px;
  font-weight: 700;
  line-height: 42px;
  color: #3f4853;
  text-align: center;
}

.std-square {
  width: 39px;
  height: 39px;
  margin-left: 23px;
  border: 2.5px solid #000;
  background-color: #fff;
}

.std-sticky {
  width: 36px;
  height: 36px;
  margin-left: 21px;
  background-color: #ffeba8;
  box-shadow: 0 3px 3px -1px #bbb;
}

.std-bolt {
  width: 42px;
  height: 42px;
  margin-left: 19px;
  background-color: #9bd4cb;
}

.std-arrow {
  width: 36px;
  height: 36px;
  margin-left: 19px;
}

.flow-grid {
  display: grid;
  grid-template-columns: repeat(5, 40px);
  grid-auto-rows: 40px;
  column-gap: 17.85px;
  row-gap: 13px;
  margin: 29px 0 0 -2.5px;
}

.flow-grid svg {
  width: 40px;
  height: 40px;
  fill: none;
  stroke: #000;
  stroke-width: 2.4;
}

.flow-grid .fill {
  fill: #000;
  stroke: none;
}

.flow-grid .bars {
  stroke-width: 2.8;
}

.flow-grid .bracket {
  stroke-width: 3.4;
}

.import {
  display: flex;
  align-items: center;
  justify-content: center;
  flex: 1;
  gap: 17px;
  padding-top: 2px;
  font-size: 23px;
  letter-spacing: 0.7px;
  color: #3c424b;
}

.import svg {
  width: 28px;
  height: 24px;
}

/* canvas */
.canvas {
  flex: 1;
  position: relative;
  overflow: hidden;
  background-color: #f1f2f4;
  padding: 41px 0 0 285px;
}

.page {
  position: relative;
  width: 936px;
  height: 662px;
  background-color: #fff;
  box-shadow: 0 0 5px rgba(0, 0, 0, 0.15);
  background-image:
    linear-gradient(#dedede 1px, transparent 1px),
    linear-gradient(90deg, #dedede 1px, transparent 1px),
    linear-gradient(#efefef 1px, transparent 1px),
    linear-gradient(90deg, #efefef 1px, transparent 1px);
  background-size: 50px 50px, 50px 50px, 10px 10px, 10px 10px;
}

.shape {
  position: absolute;
  padding-bottom: 4px;
  display: flex;
  align-items: center;
  justify-content: center;
  background-color: #fff;
  border: 2px solid #7b7b7b;
  border-radius: 3px;
  font-family: "Liberation Sans", sans-serif;
  font-size: 11.2px;
  color: #3a3f46;
  white-space: nowrap;
}

.s-logo {
  left: -1px;
  top: 0;
  width: 82px;
  height: 52px;
  padding-bottom: 7px;
}

.s-header {
  left: 129px;
  top: 0;
  width: 672px;
  height: 82px;
  padding-bottom: 7px;
}

.s-search {
  left: 849px;
  top: 0;
  width: 87px;
  height: 52px;
  padding-bottom: 7px;
}

.s-social {
  left: 849px;
  top: 61px;
  width: 81px;
  height: 22px;
  justify-content: flex-start;
  padding-bottom: 6px;
}

.s-genre {
  left: 132px;
  top: 90px;
  width: 671px;
  height: 32px;
  padding-bottom: 4px;
}

.card {
  width: 81px;
  height: 122px;
}

.c1 { left: 89px; }
.c2 { left: 249px; }
.c3 { left: 409px; }
.c4 { left: 569px; }
.c5 { left: 729px; }
.r1 { top: 200px; }
.r2 { top: 471px; }

.label {
  width: 61px;
  height: 31px;
}

.l1 { left: 99.5px; top: 331px; }
.l2 { left: 259.5px; top: 329px; }
.l3 { left: 419.5px; top: 329px; }
.l4 { left: 580.5px; top: 327px; }
.l5 { left: 742px; top: 326px; }
.l6 { left: 99.5px; top: 601px; }
.l7 { left: 259.5px; top: 601px; }
.l8 { left: 419.5px; top: 601px; }
.l9 { left: 580.5px; top: 601px; }
.l10 { left: 739px; top: 598px; }

.scroll-x {
  position: absolute;
  left: 474px;
  bottom: 3px;
  width: 586px;
  height: 10px;
  border-radius: 5px;
  background-color: #c5c8cf;
}

.scroll-y {
  position: absolute;
  right: 2px;
  top: 249px;
  width: 10px;
  height: 267px;
  border-radius: 5px;
  background-color: #c5c8cf;
}

/* bottom bar */
.bottombar {
  display: flex;
  align-items: center;
  height: 48px;
  flex: none;
  border-top: 1px solid #e2e3e6;
  background-color: #fbfcfe;
}

.foot-icon {
  height: 28px;
  width: 28px;
}

.foot-list {
  margin-left: 19px;
}

.foot-grid {
  margin-left: 26px;
}

.page-tab {
  display: flex;
  align-items: center;
  justify-content: space-between;
  width: 126px;
  height: 42px;
  margin: -5px 0 0 27px;
  padding: 0 12px;
  border-radius: 0 0 5px 5px;
  background-color: #6e7480;
  color: #fff;
  font-size: 21px;
  font-weight: 500;
}

.foot-add {
  margin-left: 21px;
}

.foot-right {
  display: flex;
  height: 100%;
  margin-left: auto;
}

.foot-cell {
  display: flex;
  align-items: center;
  justify-content: center;
  width: 62px;
  border-left: 1px solid #e2e3e6;
}

.foot-cell svg {
  width: 28px;
  height: 28px;
}

.foot-zoom {
  display: flex;
  align-items: center;
  width: 229px;
  padding-left: 19px;
  border-left: 1px solid #e2e3e6;
}

.foot-zoom svg:first-child {
  width: 22px;
  height: 4px;
}

.foot-zoom svg:last-child {
  width: 22px;
  height: 22px;
  margin-left: 31px;
}

.foot-zoom .caret {
  border-left-width: 5px;
  border-right-width: 5px;
  border-top-width: 8px;
}

.zoom-val {
  width: 44px;
  margin: 0 28px 0 33px;
  font-size: 20px;
  white-space: nowrap;
}

.foot-full {
  width: 61px;
}

.purple-line {
  height: 2px;
  flex: none;
  background-color: #5f2a86;
}
```
